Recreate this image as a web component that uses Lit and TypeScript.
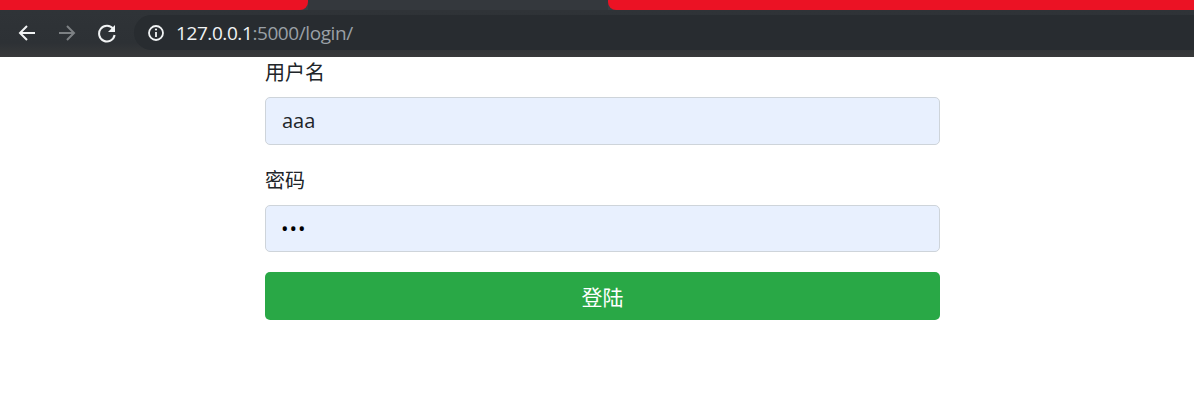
import { LitElement, html, css } from "lit";
import { customElement } from "lit/decorators.js";

@customElement("app-root")
export class AppRoot extends LitElement {
  static styles = css`
    :host { display: block; width: 1194px; height: 401px; overflow: hidden; background: #fff; font-family: "Noto Sans", "Noto Sans CJK SC", sans-serif; color: #212529; }
    .tabs { display: flex; height: 10px; background: #3a3e43; }
    .red { background: #eb1224; }
    .red.left { width: 308px; border-bottom-right-radius: 8px; }
    .active { width: 300px; background: #34383d; }
    .red.right { flex: 1; border-bottom-left-radius: 8px; }
    .toolbar { display: flex; align-items: center; height: 47px; box-sizing: border-box; padding: 0 0 2px 0; background: linear-gradient(#2f3337, #2d3135 70%, #38393a); }
    .nav { width: 40px; height: 35px; display: flex; align-items: center; justify-content: center; flex: none; }
    .nav svg { display: block; }
    .nav.first { margin-left: 7px; }
    .omni { flex: 1; margin-left: 7px; height: 35px; background: #282c30; border-radius: 18px 0 0 18px; display: flex; align-items: center; gap: 11px; padding-left: 13px; font-family: "Open Sans", sans-serif; font-size: 19px; letter-spacing: -0.42px; }
    .host { color: #f1f3f4; }
    .path { color: #9aa0a6; }
    .content { padding-left: 265px; width: 675px; display: flex; flex-direction: column; gap: 20px; }
    .field { display: flex; flex-direction: column; gap: 10px; }
    label { font-size: 20px; line-height: 30px; height: 30px; font-family: "Noto Sans CJK SC", sans-serif; }
    input { box-sizing: border-box; width: 100%; height: 47.5px; padding: 0 16px; border: 1px solid #ced4da; border-radius: 5px; background: #e8f0fe; font-family: "Open Sans", sans-serif; font-size: 20px; color: #212529; outline: none; margin: 0; }
    input[type="password"] { color: #000; letter-spacing: 1px; padding: 1px 15px 0; }
    button { height: 47.5px; border: 0; border-radius: 5px; background: #29a846; color: #fff; font-family: "Noto Sans CJK SC", sans-serif; font-size: 21px; padding: 1px 0 0; }
  `;

  render() {
    return html`
      <div class="tabs"><div class="red left"></div><div class="active"></div><div class="red right"></div></div>
      <div class="toolbar">
        <div class="nav first">
          <svg width="20" height="20" viewBox="0 0 20 20" fill="none" stroke="#f1f3f4" stroke-width="2"><path d="M18 10H3M10 3l-7 7 7 7"/></svg>
        </div>
        <div class="nav">
          <svg width="20" height="20" viewBox="0 0 20 20" fill="none" stroke="#7d8184" stroke-width="2"><path d="M2 10h15M10 3l7 7-7 7"/></svg>
        </div>
        <div class="nav">
          <svg width="20" height="20" viewBox="0 0 20 20" fill="none"><path d="M16.2 6A7.8 7.8 0 1 0 17.6 12" stroke="#f1f3f4" stroke-width="2"/><path d="M18 2v7h-7z" fill="#f1f3f4"/></svg>
        </div>
        <div class="omni">
          <svg width="18" height="18" viewBox="0 0 18 18" fill="none"><circle cx="9" cy="9" r="7" stroke="#f1f3f4" stroke-width="1.8"/><path d="M9 8v5" stroke="#f1f3f4" stroke-width="1.8"/><circle cx="9" cy="5.5" r="1.1" fill="#f1f3f4"/></svg>
          <span><span class="host">127.0.0.1</span><span class="path">:5000/login/</span></span>
        </div>
      </div>
      <div class="content">
        <div class="field"><label>用户名</label><input type="text" value="aaa" /></div>
        <div class="field"><label>密码</label><input type="password" value="aaa" /></div>
        <button>登陆</button>
      </div>
    `;
  }
}
